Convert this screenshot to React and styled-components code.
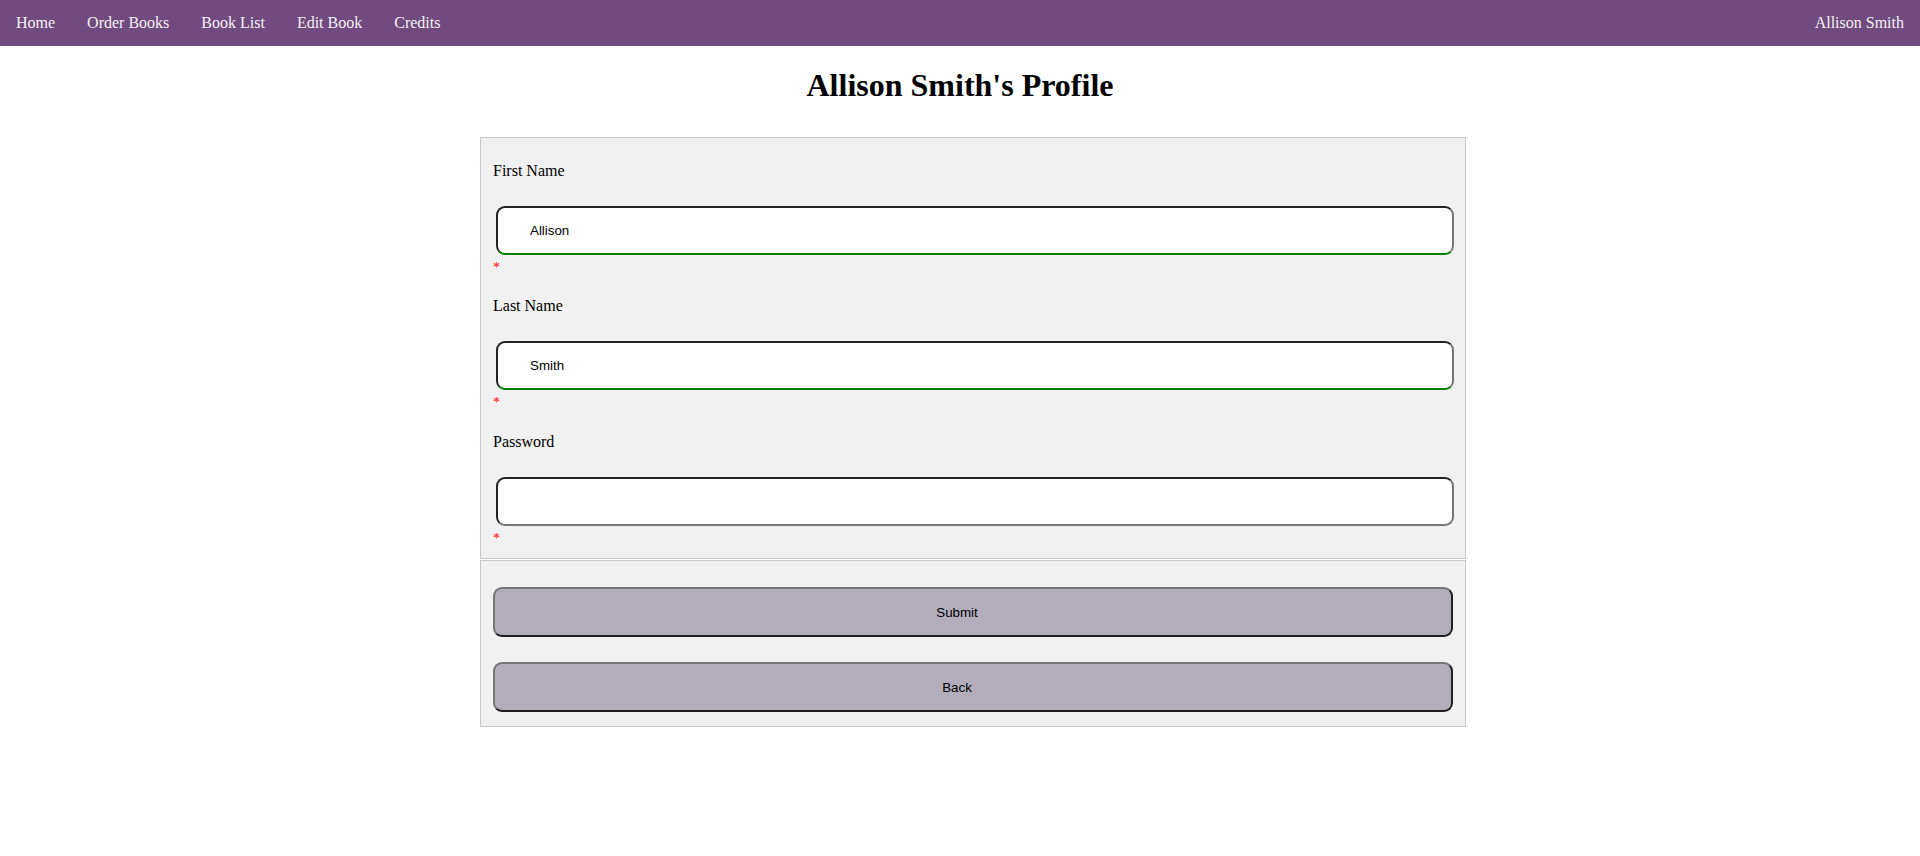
import React from "react";
import styled, { createGlobalStyle } from "styled-components";

const GlobalStyle = createGlobalStyle`
  html, body {
    margin: 0;
    padding: 0;
    background: #ffffff;
    font-family: "Liberation Serif", "Times New Roman", serif;
    font-size: 16px;
    color: #000;
  }
  * { box-sizing: content-box; }
`;

const TopNav = styled.nav`
  display: flex;
  align-items: stretch;
  justify-content: space-between;
  background: #714a7f;
  height: 46px;
`;

const NavGroup = styled.div`
  display: flex;
`;

const NavLink = styled.a`
  display: block;
  padding: 14px 16px;
  line-height: 18px;
  color: #f2f2f2;
  text-decoration: none;
  font-size: 16px;
  cursor: pointer;
`;

const Title = styled.h1`
  margin: 21px 0 0;
  height: 37px;
  line-height: 37px;
  font-size: 32px;
  font-weight: bold;
  text-align: center;
`;

const Panel = styled.div`
  margin-left: 25%;
  width: 50%;
  background: #f1f1f1;
  border: 1px solid #c8c8c8;
  padding: ${(p) => p.$pad};
  margin-top: ${(p) => p.$top};
  display: flex;
  flex-direction: column;
  gap: ${(p) => p.$gap || "0px"};
`;

const Field = styled.div`
  display: flex;
  flex-direction: column;
  padding-top: 20px;
`;

const Label = styled.label`
  display: block;
  font-size: 16px;
  line-height: 18.4px;
  height: 18.4px;
`;

const TextInput = styled.input`
  margin: 25.6px 0 0 3px;
  width: calc(100% - 2px - 68px);
  height: 15px;
  padding: 15px 32px;
  border-style: solid;
  border-width: 2px;
  border-color: #222222 #767676 #767676 #222222;
  border-radius: 9px;
  background: #ffffff;
  font-family: "Liberation Sans", Arial, sans-serif;
  font-size: 13.33px;
  color: #000;
  outline: none;
  &:valid {
    border-bottom-color: #008000;
  }
`;

const Required = styled.span`
  display: block;
  margin-top: 4px;
  height: 18.4px;
  line-height: 18.4px;
  color: #ff0000;
  font-size: 14px;
`;

const ActionButton = styled.button`
  display: block;
  width: 100%;
  height: 50px;
  box-sizing: border-box;
  background: #b3adbb;
  border-style: solid;
  border-width: 2px;
  border-color: #767676 #1f1f1f #1f1f1f #767676;
  border-radius: 9px;
  font-family: "Liberation Sans", Arial, sans-serif;
  font-size: 13.33px;
  color: #000;
  cursor: pointer;
  padding: 0 32px 0 0;
`;

const fields = [
  { label: "First Name", value: "Allison", type: "text" },
  { label: "Last Name", value: "Smith", type: "text" },
  { label: "Password", value: "", type: "password" },
];

export default function App() {
  return (
    <>
      <GlobalStyle />
      <TopNav>
        <NavGroup>
          <NavLink>Home</NavLink>
          <NavLink>Order Books</NavLink>
          <NavLink>Book List</NavLink>
          <NavLink>Edit Book</NavLink>
          <NavLink>Credits</NavLink>
        </NavGroup>
        <NavGroup>
          <NavLink>Allison Smith</NavLink>
        </NavGroup>
      </TopNav>
      <Title>Allison Smith's Profile</Title>
      <form onSubmit={(e) => e.preventDefault()}>
        <Panel $pad="4px 12px 10px" $top="33px">
          {fields.map((f) => (
            <Field key={f.label}>
              <Label>{f.label}</Label>
              <TextInput type={f.type} defaultValue={f.value} required />
              <Required>*</Required>
            </Field>
          ))}
        </Panel>
        <Panel $pad="26px 12px 14px" $top="1px" $gap="25px">
          <ActionButton type="submit">Submit</ActionButton>
          <ActionButton type="button">Back</ActionButton>
        </Panel>
      </form>
    </>
  );
}
